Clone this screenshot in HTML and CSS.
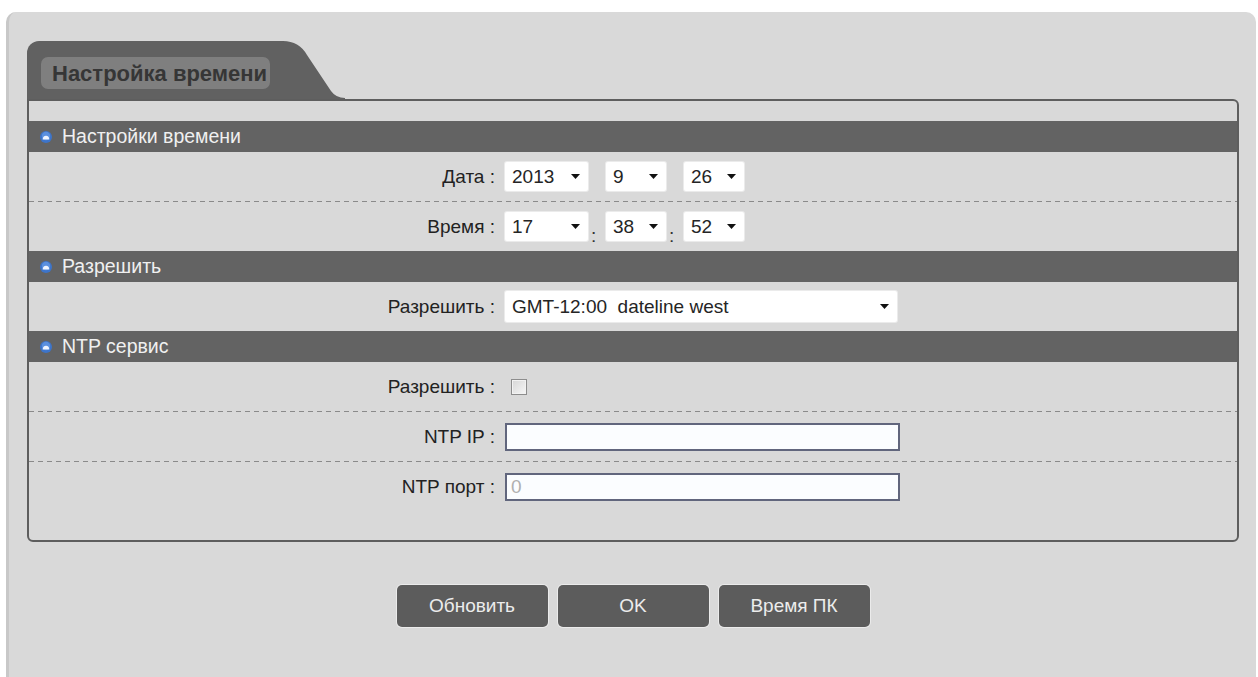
FILE: index.html
```html
<!DOCTYPE html>
<html lang="ru">
<head>
<meta charset="utf-8">
<title>Настройка времени</title>
<link rel="stylesheet" href="styles.css">
</head>
<body>
<div class="frame">
  <div class="tabs">
    <div class="tab"><div class="tab-label">Настройка времени</div></div>
    <svg class="tab-edge" width="62" height="58" viewBox="0 0 62 58"><path d="M0 0 Q16 0 24 14 L48 50 Q53 57 62 57 V58 H0 Z" fill="#616161"/></svg>
  </div>

  <div class="panel">
    <div class="section-head">
      <svg class="bullet" width="12" height="12" viewBox="0 0 12 12"><circle cx="6" cy="6" r="6" fill="#3d74c9"/><circle cx="6" cy="5" r="4.2" fill="#5b90de"/><path d="M2.6 8.6 C2.6 6.3 4 4.8 6 4.8 C8 4.8 9.4 6.3 9.4 8.6 Z" fill="#eef4ff"/></svg>
      <span>Настройки времени</span>
    </div>
    <div class="row dashed">
      <div class="label">Дата :</div>
      <div class="field">
        <div class="select w-wide"><span>2013</span><svg class="arrow" width="9" height="5" viewBox="0 0 9 5"><path d="M0 0 H9 L4.5 5 Z"/></svg></div>
        <span class="sep"></span>
        <div class="select w-narrow"><span>9</span><svg class="arrow" width="9" height="5" viewBox="0 0 9 5"><path d="M0 0 H9 L4.5 5 Z"/></svg></div>
        <span class="sep"></span>
        <div class="select w-narrow"><span>26</span><svg class="arrow" width="9" height="5" viewBox="0 0 9 5"><path d="M0 0 H9 L4.5 5 Z"/></svg></div>
      </div>
    </div>
    <div class="row">
      <div class="label">Время :</div>
      <div class="field">
        <div class="select w-wide"><span>17</span><svg class="arrow" width="9" height="5" viewBox="0 0 9 5"><path d="M0 0 H9 L4.5 5 Z"/></svg></div>
        <span class="sep">:</span>
        <div class="select w-narrow"><span>38</span><svg class="arrow" width="9" height="5" viewBox="0 0 9 5"><path d="M0 0 H9 L4.5 5 Z"/></svg></div>
        <span class="sep">:</span>
        <div class="select w-narrow"><span>52</span><svg class="arrow" width="9" height="5" viewBox="0 0 9 5"><path d="M0 0 H9 L4.5 5 Z"/></svg></div>
      </div>
    </div>

    <div class="section-head">
      <svg class="bullet" width="12" height="12" viewBox="0 0 12 12"><circle cx="6" cy="6" r="6" fill="#3d74c9"/><circle cx="6" cy="5" r="4.2" fill="#5b90de"/><path d="M2.6 8.6 C2.6 6.3 4 4.8 6 4.8 C8 4.8 9.4 6.3 9.4 8.6 Z" fill="#eef4ff"/></svg>
      <span>Разрешить</span>
    </div>
    <div class="row">
      <div class="label">Разрешить :</div>
      <div class="field">
        <div class="select w-zone"><span>GMT-12:00&nbsp; dateline west</span><svg class="arrow" width="9" height="5" viewBox="0 0 9 5"><path d="M0 0 H9 L4.5 5 Z"/></svg></div>
      </div>
    </div>

    <div class="section-head">
      <svg class="bullet" width="12" height="12" viewBox="0 0 12 12"><circle cx="6" cy="6" r="6" fill="#3d74c9"/><circle cx="6" cy="5" r="4.2" fill="#5b90de"/><path d="M2.6 8.6 C2.6 6.3 4 4.8 6 4.8 C8 4.8 9.4 6.3 9.4 8.6 Z" fill="#eef4ff"/></svg>
      <span>NTP сервис</span>
    </div>
    <div class="row dashed">
      <div class="label">Разрешить :</div>
      <div class="field"><span class="check"></span></div>
    </div>
    <div class="row dashed">
      <div class="label">NTP IP :</div>
      <div class="field"><input class="text-input" type="text" value=""></div>
    </div>
    <div class="row">
      <div class="label">NTP порт :</div>
      <div class="field"><input class="text-input muted" type="text" value="0"></div>
    </div>
  </div>

  <div class="actions">
    <button class="btn" type="button">Обновить</button>
    <button class="btn" type="button">OK</button>
    <button class="btn" type="button">Время ПК</button>
  </div>
</div>
</body>
</html>
```

FILE: styles.css
```css
* {
  box-sizing: border-box;
}

html,
body {
  margin: 0;
  padding: 0;
  background: #ffffff;
}

body {
  font-family: "Liberation Sans", Arial, sans-serif;
  color: #222222;
  overflow: hidden;
}

/* outer gray work area */
.frame {
  margin: 12px 2px 0 6px;
  height: 665px;
  background: #d9d9d9;
  border-left: 3px solid #c8c8c8;
  border-radius: 10px 10px 0 0;
  padding: 29px 17px 0 18px;
}

/* page tab */
.tabs {
  display: flex;
  align-items: flex-end;
  height: 58px;
}

.tab {
  width: 256px;
  height: 58px;
  background: #616161;
  border-top-left-radius: 12px;
  padding: 16px 0 0 14px;
}

.tab-label {
  width: 229px;
  height: 32px;
  background: #7f7f7f;
  border-radius: 7px;
  padding-left: 11px;
  font-weight: bold;
  font-size: 22px;
  line-height: 33px;
  color: #363636;
  white-space: nowrap;
}

.tab-edge {
  display: block;
  flex: none;
}

/* framed settings panel */
.panel {
  border: 2px solid #5e5e5e;
  border-radius: 0 6px 6px 6px;
  padding: 20px 0 29px;
}

.section-head {
  height: 31px;
  background: #636363;
  display: flex;
  align-items: center;
  gap: 10px;
  padding-left: 11px;
  color: #f0f0f0;
  font-size: 19.5px;
}

.bullet {
  display: block;
  flex: none;
}

.row {
  display: flex;
  align-items: center;
  height: 49px;
}

.row.dashed {
  height: 50px;
  padding-bottom: 1px;
  background: repeating-linear-gradient(to right, #8a8a8a 0 5px, transparent 5px 9px) left bottom / 100% 1px no-repeat;
}

.label {
  width: 466px;
  margin-right: 10px;
  text-align: right;
  font-size: 19px;
  color: #222222;
  white-space: nowrap;
}

.field {
  display: flex;
  align-items: center;
}

/* drop-down boxes */
.select {
  display: flex;
  align-items: center;
  justify-content: space-between;
  height: 29px;
  padding: 0 8px 0 7px;
  background: #ffffff;
  border-radius: 2px;
  box-shadow: 0 0 0 1px #ebebeb;
  font-size: 19px;
  color: #252525;
  white-space: nowrap;
}

.select .arrow {
  display: block;
  flex: none;
  fill: #111111;
}

.w-wide {
  width: 83px;
}

.w-narrow {
  width: 60px;
}

.w-zone {
  width: 392px;
  height: 31px;
}

.sep {
  width: 18px;
  align-self: flex-end;
  padding-left: 3px;
  font-size: 19px;
  line-height: 19px;
  margin-bottom: -4px;
  color: #333333;
}

/* checkbox */
.check {
  display: block;
  width: 16px;
  height: 16px;
  margin-left: 6px;
  border: 1px solid #8d8d8d;
  background: linear-gradient(135deg, #d6d6d6, #f7f7f7);
  box-shadow: inset 0 0 0 1px #f2f2f2;
}

/* text fields */
.text-input {
  display: block;
  width: 395px;
  height: 28px;
  margin: 0;
  padding: 0 4px;
  border: 2px solid #61667d;
  background: #fbfdff;
  font-family: "Liberation Sans", Arial, sans-serif;
  font-size: 19px;
  color: #222222;
  outline: none;
}

.text-input.muted {
  color: #b0b0b0;
}

/* bottom buttons */
.actions {
  display: flex;
  justify-content: center;
  gap: 10px;
  margin-top: 43px;
}

.btn {
  width: 151px;
  height: 42px;
  border: none;
  border-radius: 5px;
  background: #5c5c5c;
  box-shadow: 0 0 0 1px #ebebeb;
  color: #ececec;
  font-family: "Liberation Sans", Arial, sans-serif;
  font-size: 19px;
  padding: 0;
}
```
